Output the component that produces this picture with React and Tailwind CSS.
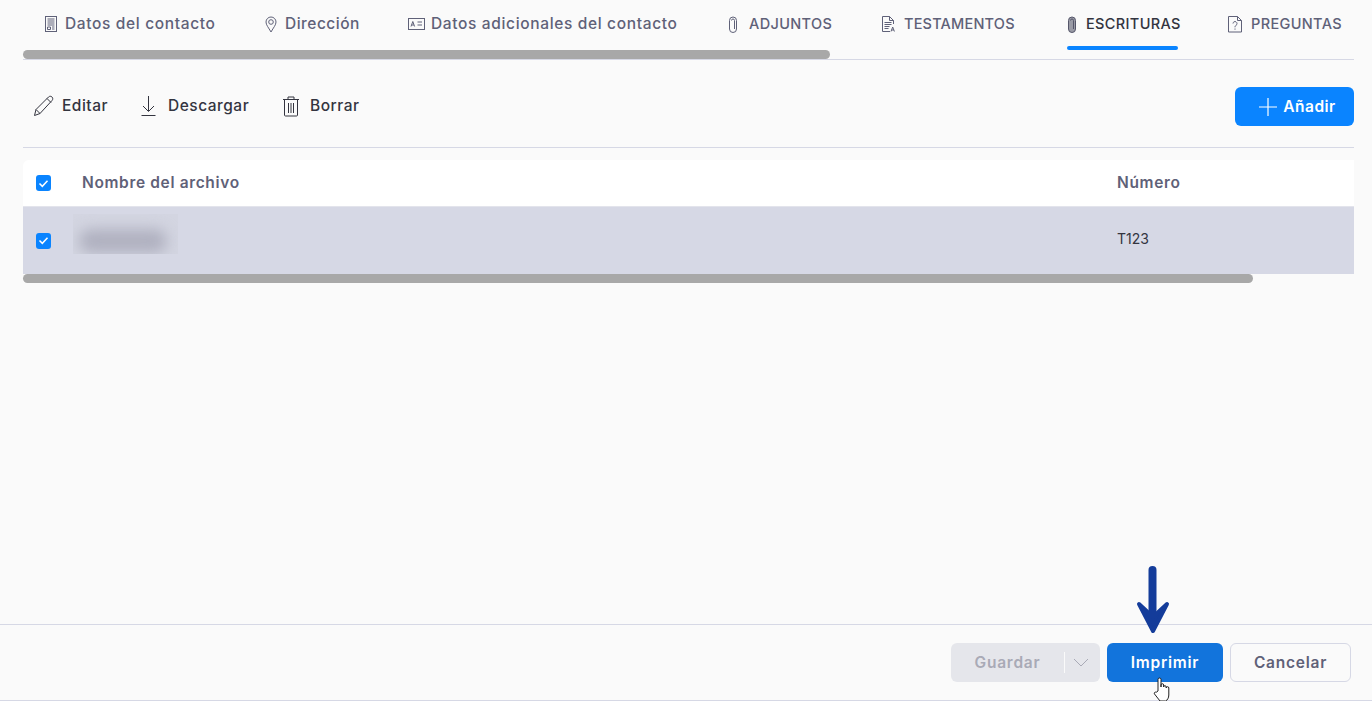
const DocIcon = () => (
  <svg className="shrink-0" width="14" height="16" viewBox="0 0 14 16" fill="none" stroke="currentColor" strokeWidth="1">
    <rect x="1.500" y="0.500" width="11" height="15" />
    <path d="M3.500 3h7M3.500 5h7M3.500 7h7M3.500 9h7" />
    <path d="M3.500 11h3v2.500h-3zM8 11h2.500M8 13h2.500" />
  </svg>
)

const PinIcon = () => (
  <svg className="shrink-0" width="14" height="17" viewBox="0 0 14 17" fill="none" stroke="currentColor" strokeWidth="1">
    <path d="M7 16C4.500 11.500 2 9 2 6a5 5 0 0 1 10 0c0 3-2.500 5.500-5 10z" />
    <circle cx="7" cy="6" r="2.300" />
  </svg>
)

const CardIcon = () => (
  <svg className="shrink-0" width="17" height="12" viewBox="0 0 17 12" fill="none" stroke="currentColor" strokeWidth="1">
    <rect x="0.500" y="0.500" width="16" height="11" />
    <path d="M3 8.500l1.800-5 1.800 5M3.700 7h2.200M9.500 4h4.500M9.500 7h4.500" />
  </svg>
)

const ClipIcon = ({ solid }) => (
  <svg className="shrink-0" width="10" height="17" viewBox="0 0 10 17" fill={solid ? "#9a9ba6" : "none"} stroke={solid ? "#55566a" : "currentColor"} strokeWidth="1">
    <path d="M1.500 4.500a3.500 3.500 0 0 1 7 0v8.500a3.500 3.500 0 0 1-7 0z" />
    <path d="M3.500 4.500a1.500 1.500 0 0 1 3 0v8.500" />
  </svg>
)

const TestamentIcon = () => (
  <svg className="shrink-0" width="16" height="17" viewBox="0 0 16 17" fill="none" stroke="currentColor" strokeWidth="1">
    <path d="M9 15.500H1.500V.5H8.500L12.500 4.500V8" />
    <path d="M8.500.5v4h4M3.500 6.500h7M3.500 8.500h7M3.500 10.500h5M3.500 12.500h4" />
    <path d="M10 15.500l1.700-4.500 1.700 4.500M10.600 14h2.200" />
  </svg>
)

const QuestionIcon = () => (
  <svg className="shrink-0" width="14" height="17" viewBox="0 0 14 17" fill="none" stroke="currentColor" strokeWidth="1">
    <path d="M.5.5H9.500L13.500 4.500V16H.5z" />
    <path d="M9.500.5v4h4M5 7.500a2 2 0 1 1 3 1.800c-.8.500-1 1-1 2M7 12.500v1.200" />
  </svg>
)

const tabs = [
  { label: "Datos del contacto", icon: <DocIcon />, w: "w-[171px] gap-[7px] text-[15.500px] tracking-[0.65px]" },
  { label: "Dirección", icon: <PinIcon />, w: "w-[95px] gap-[7px] text-[15.500px] tracking-[0.5px]" },
  { label: "Datos adicionales del contacto", icon: <CardIcon />, w: "w-[271px] gap-[6px] text-[15.500px] tracking-[0.65px]" },
  { label: "ADJUNTOS", icon: <ClipIcon />, w: "w-[104px] gap-[11px] text-[14.500px] tracking-[0.35px]" },
  { label: "TESTAMENTOS", icon: <TestamentIcon />, w: "w-[137px] gap-[7px] text-[14.500px] tracking-[0.2px]" },
  { label: "ESCRITURAS", icon: <ClipIcon solid />, w: "w-[112px] gap-[9px] text-[14.500px] tracking-[0.35px]", active: true },
  { label: "PREGUNTAS", icon: <QuestionIcon />, w: "w-[114px] gap-[9px] text-[14.500px] tracking-[0.35px]" },
]

const CheckBox = () => (
  <span className="flex h-[16px] w-[15px] items-center justify-center rounded-[3px] bg-[#0a84ff]">
    <svg width="11" height="9" viewBox="0 0 11 9" fill="none" stroke="#fff" strokeWidth="1.500">
      <path d="M1.500 4.500l2.800 2.800 5.200-5.600" />
    </svg>
  </span>
)

const App = () => {
  return (
    <div className="relative flex h-[701px] w-[1372px] flex-col overflow-hidden bg-[#fafafa] font-['Inter',sans-serif] text-[#33343f]">
      <div className="ml-[23px] w-[1331px] border-b border-[#d6d8e5]">
        <div className="flex h-[59px] gap-[49px] pl-[21px]">
          {tabs.map((tab) => (
            <div key={tab.label} className={`relative flex shrink-0 items-center pb-[11px] ${tab.w} whitespace-nowrap font-medium ${tab.active ? "text-[#33343f]" : "text-[#5f6178]"}`}>
              {tab.icon}
              <span>{tab.label}</span>
              {tab.active && <span className="absolute bottom-[9px] left-0 h-[4px] w-[111px] rounded-full bg-[#0a84ff]"></span>}
            </div>
          ))}
        </div>
      </div>
      <div className="absolute left-[23px] top-[50px] h-[9px] w-[807px] rounded-full bg-[#a8a8a8]"></div>

      <div className="ml-[23px] flex h-[88px] w-[1331px] items-center justify-between border-b border-[#d6d8e5] pt-[6px]">
        <div className="mb-[2px] flex items-center text-[15.500px] font-medium tracking-[0.5px]">
          <div className="ml-[10px] flex w-[107px] items-center gap-[7px]">
            <svg className="shrink-0" width="22" height="22" viewBox="0 0 22 22" fill="none" stroke="#33343f" strokeWidth="1">
              <path d="M1.500 20.500l1.500-6L15.500 2c1-1 2.500-1 3.500 0s1 2.500 0 3.500L7 18.500z" />
              <path d="M3 14.500l4 4M14 3.500l4 4" />
            </svg>
            <span>Editar</span>
          </div>
          <div className="flex w-[142px] items-center gap-[11px]">
            <svg className="shrink-0" width="17" height="22" viewBox="0 0 17 22" fill="none" stroke="#33343f" strokeWidth="1">
              <path d="M8.500 1v15M3 11l5.500 5.500L14 11M1.500 20.500h14" />
            </svg>
            <span>Descargar</span>
          </div>
          <div className="flex items-center gap-[10px]">
            <svg className="shrink-0" width="18" height="22" viewBox="0 0 18 22" fill="none" stroke="#33343f" strokeWidth="1">
              <path d="M1 4.500h16M6 4.500V2h6v2.500M2.500 4.500h13V20a1 1 0 0 1-1 1h-11a1 1 0 0 1-1-1zM6.500 8v10M9 8v10M11.500 8v10" />
            </svg>
            <span>Borrar</span>
          </div>
        </div>
        <button className="flex h-[39px] w-[119px] items-center justify-center gap-[5px] rounded-[6px] bg-[#0a84ff] pl-[5px] text-[15.500px] font-semibold tracking-[0.5px] text-white">
          <svg width="20" height="20" viewBox="0 0 20 20" stroke="#fff" strokeWidth="1.200">
            <path d="M10 1v18M1 10h18" />
          </svg>
          Añadir
        </button>
      </div>

      <div className="ml-[23px] mt-[12px] w-[1331px]">
        <div className="flex h-[47px] items-center rounded-tl-[6px] border-b border-[#e3e4ec] bg-white text-[15.500px] font-semibold tracking-[0.65px] text-[#5f6178]">
          <div className="ml-[13px] w-[46px]"><CheckBox /></div>
          <div className="w-[1035px]">Nombre del archivo</div>
          <div>Número</div>
        </div>
        <div className="flex h-[67px] items-center bg-[#d6d8e5] text-[14px]">
          <div className="ml-[13px] w-[37px]"><CheckBox /></div>
          <div className="mb-[14px] h-[40px] w-[105px] overflow-hidden bg-[#d3d5e1] pl-[6px] pt-[15px]">
            <div className="h-[24px] w-[88px] rounded-full bg-[#b0b1c0] blur-[7px]"></div>
          </div>
          <div className="mb-[5px] ml-[939px]">T123</div>
        </div>
        <div className="h-[9px] w-[1230px] rounded-full bg-[#a8a8a8]"></div>
      </div>

      <div className="mt-auto flex h-[77px] items-start justify-end gap-[7px] border-y border-[#d6d8e5] pr-[21px] pt-[18px] text-[15.500px] font-semibold tracking-[0.75px]">
        <div className="flex h-[39px] w-[149px] items-center rounded-[6px] bg-[#e5e6eb] text-[#a9aab6]">
          <span className="w-[113px] text-center">Guardar</span>
          <span className="h-[21px] w-px bg-[#fafafa]"></span>
          <svg className="ml-[8px]" width="16" height="9" viewBox="0 0 16 9" fill="none" stroke="#a9aab6" strokeWidth="1">
            <path d="M1 1l7 7 7-7" />
          </svg>
        </div>
        <button className="h-[39px] w-[116px] rounded-[6px] bg-[#1274dc] text-white">Imprimir</button>
        <button className="h-[39px] w-[121px] rounded-[6px] border border-[#d6d8e5] text-[#5f6178]">Cancelar</button>
      </div>

      {/* annotation arrow and mouse pointer lie over the page */}
      <svg className="absolute left-[1136px] top-[565px]" width="34" height="70" viewBox="0 0 34 70" fill="none">
        <path d="M16.500 5V50" stroke="#143c9a" strokeWidth="8" strokeLinecap="round" />
        <path d="M3 39l14 27 14-27-14 13z" fill="#143c9a" stroke="#143c9a" strokeWidth="4" strokeLinejoin="round" />
      </svg>
      <svg className="absolute left-[1153px] top-[677px]" width="20" height="25" viewBox="0 0 20 25" fill="#fff" stroke="#222" strokeWidth="1">
        <path d="M5 14V2.500a1.500 1.500 0 0 1 3 0V10l0-2a1.300 1.300 0 0 1 2.600 0v2a1.300 1.300 0 0 1 2.600 0v1a1.300 1.300 0 0 1 2.600 0v7c0 3-1.500 5-3 6H7L1.500 17c-.8-1 .5-2.500 1.700-1.700z" />
      </svg>
    </div>
  )
}

export default App
